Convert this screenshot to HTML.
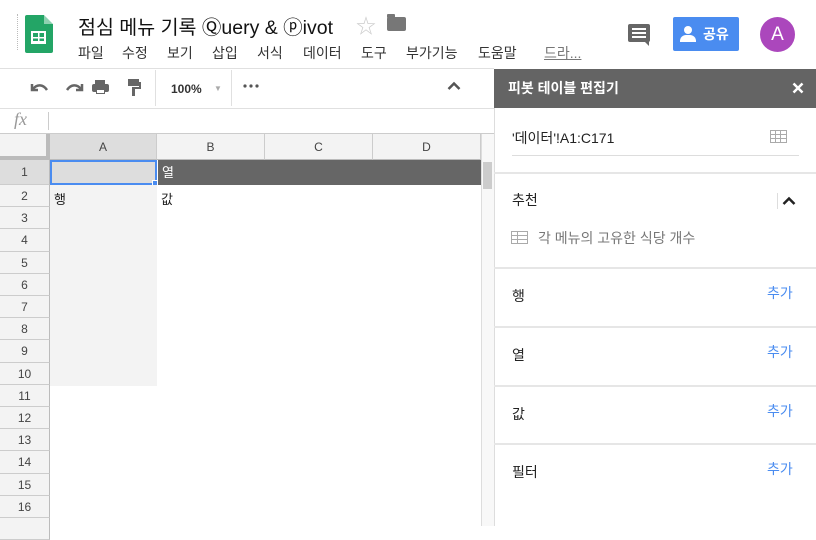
<!DOCTYPE html>
<html><head><meta charset="utf-8"><style>
*{margin:0;padding:0;box-sizing:border-box}
body{width:816px;height:526px;overflow:hidden;background:#fff;font-family:"Liberation Sans","Noto Sans CJK KR",sans-serif;position:relative;color:#222}
.a{position:absolute}
.menu span{position:absolute;top:43px;font-size:14px;color:#333}
.rh{position:absolute;left:0;width:50px;background:#f3f3f3;border-bottom:1px solid #ccc;border-right:1px solid #bbb;font-size:12px;color:#444;text-align:center}
.ch{position:absolute;top:134px;height:26px;background:#f3f3f3;border-right:1px solid #ccc;border-bottom:1px solid #bbb;font-size:12px;color:#444;text-align:center;line-height:26px}
.sep{position:absolute;left:494px;width:322px;height:2px;background:#e6e6e6}
.lab{position:absolute;left:512px;font-size:14px;color:#222}
.add{position:absolute;left:767px;font-size:14px;color:#4a8cf0}
</style></head><body>
<!-- logo -->
<div class="a" style="left:17px;top:14px;height:36px;border-left:1px dotted #bbb"></div>
<div class="a" style="left:25px;top:15px;width:28px;height:38px;background:#23a566;border-radius:2px"></div>
<div class="a" style="left:44px;top:15px;width:0;height:0;border-top:9px solid #fff;border-left:9px solid #8ed1b1"></div>
<div class="a" style="left:31px;top:31px;width:15px;height:13px;border:2px solid #fff;background:linear-gradient(#fff,#fff) 0 4px/100% 1.5px no-repeat,linear-gradient(#fff,#fff) 0 8px/100% 1.5px no-repeat,linear-gradient(#fff,#fff) 5px 0/1.5px 100% no-repeat"></div>
<div class="a" style="left:78px;top:11px;font-size:19.5px;color:#111">점심 메뉴 기록 Ⓠuery &amp; ⓟivot</div>
<div class="a" style="left:356px;top:10px;font-size:20px;color:#ccc">☆</div>
<div class="a" style="left:387px;top:17px;width:19px;height:14px;background:#777;border-radius:2px"></div>
<div class="a" style="left:387px;top:14px;width:8px;height:4px;background:#777;border-radius:1px"></div>
<div class="menu"><span style="left:78px">파일</span><span style="left:122px">수정</span><span style="left:167px">보기</span><span style="left:212px">삽입</span><span style="left:257px">서식</span><span style="left:303px">데이터</span><span style="left:361px">도구</span><span style="left:406px">부가기능</span><span style="left:478px">도움말</span><span style="left:544px;color:#777;text-decoration:underline">드라...</span></div>
<!-- comment icon -->
<div class="a" style="left:628px;top:24px;width:22px;height:18px;background:#666;border-radius:2px"></div>
<div class="a" style="left:644px;top:41px;border-top:5px solid #666;border-left:5px solid transparent"></div>
<div class="a" style="left:632px;top:28px;width:14px;height:2px;background:#fff;box-shadow:0 4px 0 #fff,0 8px 0 #fff"></div>
<div class="a" style="left:673px;top:17px;width:66px;height:34px;background:#4a8cf0;border-radius:2px;color:#fff;font-size:14px;font-weight:bold;line-height:34px;padding-left:30px">공유</div>
<div class="a" style="left:684px;top:26px;width:8px;height:8px;border-radius:50%;background:#fff"></div>
<div class="a" style="left:680px;top:35px;width:16px;height:7px;border-radius:6px 6px 0 0;background:#fff"></div>
<div class="a" style="left:760px;top:17px;width:35px;height:35px;border-radius:50%;background:#ab47bc;color:#fff;font-size:19px;text-align:center;line-height:35px">A</div>
<!-- toolbar -->
<div class="a" style="left:0;top:68px;width:494px;height:1px;background:#e0e0e0"></div>
<svg class="a" style="left:28px;top:78px" width="120" height="20" viewBox="0 0 120 20">
<path d="M4 6v6h6" fill="none" stroke="#666" stroke-width="2.5"/><path d="M5 11c4-5 10-5 14 1" fill="none" stroke="#666" stroke-width="2.5"/>
<path d="M54 6v6h-6" fill="none" stroke="#666" stroke-width="2.5"/><path d="M53 11c-4-5-10-5-14 1" fill="none" stroke="#666" stroke-width="2.5"/>
<rect x="67" y="2" width="10" height="4" fill="#666"/><rect x="64" y="6" width="17" height="8" rx="2" fill="#666"/><rect x="68" y="11" width="9" height="5" fill="#666"/><rect x="69" y="12" width="7" height="3" fill="#fff"/>
<rect x="100" y="1" width="11" height="7" fill="#666"/><rect x="111" y="4" width="2" height="6" fill="#666"/><rect x="104" y="9" width="9" height="2" fill="#666"/><rect x="104" y="10" width="3" height="8" fill="#666"/>
</svg>
<div class="a" style="left:155px;top:70px;width:1px;height:36px;background:#e0e0e0"></div>
<div class="a" style="left:171px;top:82px;font-size:12px;color:#333;font-weight:bold">100%</div>
<div class="a" style="left:214px;top:84px;font-size:8px;color:#aaa">▼</div>
<div class="a" style="left:231px;top:70px;width:1px;height:36px;background:#e0e0e0"></div>
<svg class="a" style="left:243px;top:84px" width="16" height="4"><circle cx="2" cy="2" r="1.6" fill="#555"/><circle cx="8" cy="2" r="1.6" fill="#555"/><circle cx="14" cy="2" r="1.6" fill="#555"/></svg>
<svg class="a" style="left:447px;top:81px" width="14" height="9"><path d="M1.5 8L7 2.5 12.5 8" fill="none" stroke="#555" stroke-width="2.5"/></svg>
<div class="a" style="left:0;top:108px;width:494px;height:1px;background:#e0e0e0"></div>
<div class="a" style="left:14px;top:109px;font-size:18px;font-style:italic;color:#999;font-family:'Liberation Serif',serif">fx</div>
<div class="a" style="left:48px;top:112px;width:1px;height:18px;background:#ccc"></div>
<div class="a" style="left:0;top:133px;width:494px;height:1px;background:#ccc"></div>
<!-- grid -->
<div class="a" style="left:0;top:134px;width:50px;height:26px;background:#f3f3f3;border-right:4px solid #bbb;border-bottom:4px solid #bbb"></div>
<div class="ch" style="left:50px;width:107px;background:#ddd">A</div>
<div class="ch" style="left:157px;width:108px">B</div>
<div class="ch" style="left:265px;width:108px">C</div>
<div class="ch" style="left:373px;width:108px">D</div>
<div class="a" style="left:481px;top:134px;width:13px;height:392px;background:#f8f8f8;border-left:1px solid #ddd"></div>
<div class="a" style="left:483px;top:162px;width:9px;height:27px;background:#ccc"></div>
<div class="rh" style="top:160px;height:25px;line-height:25px;background:#ddd">1</div>
<div class="a" style="left:50px;top:160px;width:107px;height:25px;background:#ddd;border:2px solid #4a8cf0"></div>
<div class="a" style="left:152px;top:180px;width:6px;height:6px;background:#4a8cf0;border:1px solid #fff"></div>
<div class="a" style="left:158px;top:160px;width:323px;height:25px;background:#666;color:#fff;font-size:13px;line-height:25px;padding-left:4px">열</div>
<div class="a" style="left:50px;top:185px;width:107px;height:201px;background:#f3f3f3"></div>
<div class="a" style="left:54px;top:189px;font-size:13px">행</div>
<div class="a" style="left:161px;top:189px;font-size:13px">값</div>
<div class="rh" style="top:185px;height:22.2px;line-height:22px">2</div>
<div class="rh" style="top:207.2px;height:22.2px;line-height:22px">3</div>
<div class="rh" style="top:229.4px;height:22.2px;line-height:22px">4</div>
<div class="rh" style="top:251.6px;height:22.2px;line-height:22px">5</div>
<div class="rh" style="top:273.8px;height:22.2px;line-height:22px">6</div>
<div class="rh" style="top:296px;height:22.2px;line-height:22px">7</div>
<div class="rh" style="top:318.2px;height:22.2px;line-height:22px">8</div>
<div class="rh" style="top:340.4px;height:22.2px;line-height:22px">9</div>
<div class="rh" style="top:362.6px;height:22.2px;line-height:22px">10</div>
<div class="rh" style="top:384.8px;height:22.2px;line-height:22px">11</div>
<div class="rh" style="top:407px;height:22.2px;line-height:22px">12</div>
<div class="rh" style="top:429.2px;height:22.2px;line-height:22px">13</div>
<div class="rh" style="top:451.4px;height:22.2px;line-height:22px">14</div>
<div class="rh" style="top:473.6px;height:22.2px;line-height:22px">15</div>
<div class="rh" style="top:495.8px;height:22.2px;line-height:22px">16</div>
<div class="rh" style="top:518px;height:22.2px"></div>
<!-- panel -->
<div class="a" style="left:494px;top:69px;width:322px;height:457px;border-left:1px solid #ddd"></div>
<div class="a" style="left:494px;top:69px;width:322px;height:39px;background:#646464;color:#fff;font-size:14px;font-weight:bold;line-height:39px;padding-left:14px">피봇 테이블 편집기</div>
<svg class="a" style="left:792px;top:82px" width="12" height="12"><path d="M1.5 1.5l9 9M10.5 1.5l-9 9" stroke="#fff" stroke-width="2.5"/></svg>
<div class="a" style="left:512px;top:128px;font-size:14px;color:#222">'데이터'!A1:C171</div>
<div class="a" style="left:770px;top:130px;width:17px;height:13px;border:1px solid #aaa;background:linear-gradient(#aaa,#aaa) 0 3px/100% 1px no-repeat,linear-gradient(#aaa,#aaa) 0 7px/100% 1px no-repeat,linear-gradient(#aaa,#aaa) 4px 0/1px 100% no-repeat,linear-gradient(#aaa,#aaa) 9px 0/1px 100% no-repeat"></div>
<div class="a" style="left:512px;top:155px;width:287px;height:1px;background:#ddd"></div>
<div class="sep" style="top:172px"></div>
<div class="lab" style="top:190px">추천</div>
<div class="a" style="left:777px;top:193px;width:1px;height:16px;background:#ddd"></div>
<svg class="a" style="left:782px;top:196px" width="14" height="9"><path d="M1.5 8L7 2.5 12.5 8" fill="none" stroke="#222" stroke-width="2.5"/></svg>
<div class="a" style="left:511px;top:231px;width:17px;height:13px;border:1px solid #aaa;background:linear-gradient(#aaa,#aaa) 0 3px/100% 1px no-repeat,linear-gradient(#aaa,#aaa) 0 7px/100% 1px no-repeat,linear-gradient(#aaa,#aaa) 5px 0/1px 100% no-repeat"></div>
<div class="a" style="left:538px;top:228px;font-size:14px;color:#777">각 메뉴의 고유한 식당 개수</div>
<div class="sep" style="top:267px"></div>
<div class="lab" style="top:286px">행</div><div class="add" style="top:283px">추가</div>
<div class="sep" style="top:326px"></div>
<div class="lab" style="top:345px">열</div><div class="add" style="top:342px">추가</div>
<div class="sep" style="top:385px"></div>
<div class="lab" style="top:404px">값</div><div class="add" style="top:401px">추가</div>
<div class="sep" style="top:443px"></div>
<div class="lab" style="top:462px">필터</div><div class="add" style="top:459px">추가</div>
</body></html>
